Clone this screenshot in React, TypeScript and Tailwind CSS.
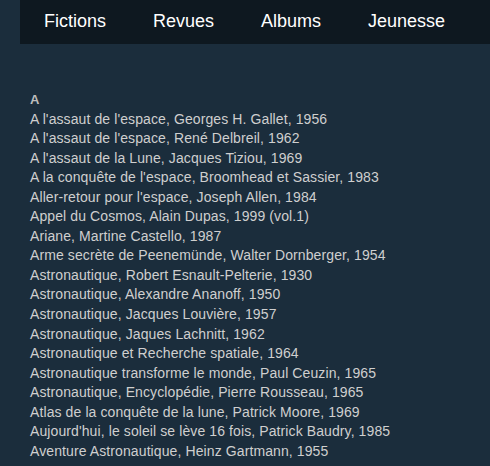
const books = [
  "A l'assaut de l'espace, Georges H. Gallet, 1956",
  "A l'assaut de l'espace, René Delbreil, 1962",
  "A l'assaut de la Lune, Jacques Tiziou, 1969",
  "A la conquête de l'espace, Broomhead et Sassier, 1983",
  "Aller-retour pour l'espace, Joseph Allen, 1984",
  "Appel du Cosmos, Alain Dupas, 1999 (vol.1)",
  "Ariane, Martine Castello, 1987",
  "Arme secrète de Peenemünde, Walter Dornberger, 1954",
  "Astronautique, Robert Esnault-Pelterie, 1930",
  "Astronautique, Alexandre Ananoff, 1950",
  "Astronautique, Jacques Louvière, 1957",
  "Astronautique, Jaques Lachnitt, 1962",
  "Astronautique et Recherche spatiale, 1964",
  "Astronautique transforme le monde, Paul Ceuzin, 1965",
  "Astronautique, Encyclopédie, Pierre Rousseau, 1965",
  "Atlas de la conquête de la lune, Patrick Moore, 1969",
  "Aujourd'hui, le soleil se lève 16 fois, Patrick Baudry, 1985",
  "Aventure Astronautique, Heinz Gartmann, 1955",
];

const menu = ["Fictions", "Revues", "Albums", "Jeunesse"];

export default function App() {
  return (
    <div className="w-[490px] h-[466px] overflow-hidden bg-[#1b2d3c] font-['Liberation_Sans',Arial,sans-serif]">
      <nav className="ml-5 h-[44px] bg-[#0e1820] flex items-center pl-6 pb-[2px] gap-[47px]">
        {menu.map((item) => (
          <a key={item} className="text-white text-[18px] leading-none">
            {item}
          </a>
        ))}
      </nav>

      <div className="pl-[30px] pt-[46px]">
        <h3 className="text-[#bdbdbd] text-[13px] font-bold leading-[19.5px]">A</h3>
        <ul>
          {books.map((b) => (
            <li key={b} className="text-[#cfcfcf] text-[14px] tracking-[0.1px] leading-[19.55px]">
              {b}
            </li>
          ))}
        </ul>
      </div>
    </div>
  );
}
